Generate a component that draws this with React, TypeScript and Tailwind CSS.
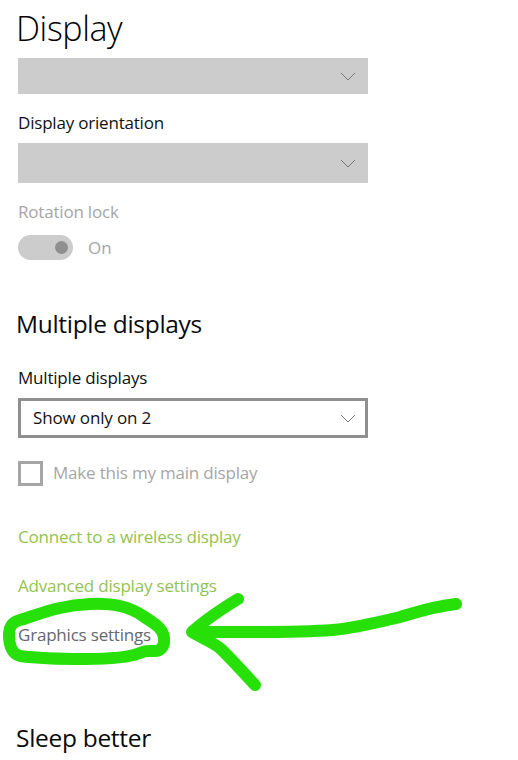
const font = "font-['Open_Sans','Noto_Sans',sans-serif]"

function Chevron() {
  return (
    <svg width="16" height="9" viewBox="0 0 16 9" fill="none" stroke="#777" strokeWidth="1">
      <path d="M1 1l7 7 7-7" />
    </svg>
  )
}

function Scribble() {
  return (
    <svg className="absolute left-0 top-[510px]" width="518" height="250" viewBox="0 0 518 250" fill="none" stroke="#27e007" strokeLinecap="round" strokeLinejoin="round">
      <path
        strokeWidth="12"
        d="M9 125C9 116 12 112 20 110C40 104 60 95 90 94C115 93 130 97 143 106C155 114 163 118 164 128C165 137 160 141 155 141C148 141 145 140 140 143C125 149 100 149 85 149C60 149 35 148 20 146C12 144 9 135 9 125Z"
      />
      <path
        strokeWidth="12"
        d="M456 94C430 97 415 103 400 107C375 113 355 118 333 120C290 123 240 122 192 122M238 89C220 100 205 110 192 122C205 130 215 133 222 140C235 153 245 164 255 175"
      />
    </svg>
  )
}

export default function App() {
  return (
    <div className={`relative h-[760px] w-[518px] overflow-hidden bg-white ${font}`}>
      <div className="px-[18px]">
        <h1 className="-ml-[2px] h-[58px] pt-[6px] text-[34px] font-light leading-[44px] tracking-[-0.4px] text-black">Display</h1>
        <div className="flex h-9 w-[350px] items-center justify-end bg-[#cccccc] pr-3">
          <Chevron />
        </div>
        <p className="mt-[18px] h-[31px] text-[17px] leading-[22px] tracking-[-0.2px] text-[#111]">Display orientation</p>
        <div className="flex h-10 w-[350px] items-center justify-end bg-[#cccccc] pr-3">
          <Chevron />
        </div>
        <p className="mt-[18px] h-[34px] text-[17px] leading-[22px] tracking-[-0.2px] text-[#a6a6a6]">Rotation lock</p>
        <div className="flex h-[25px] items-center">
          <div className="flex h-[25px] w-[55px] items-center justify-end rounded-full bg-[#cccccc] pr-[5px]">
            <div className="h-[13px] w-[13px] rounded-full bg-[#8f8f8f]" />
          </div>
          <span className="ml-[15px] text-[17px] text-[#a6a6a6]">On</span>
        </div>
        <h2 className="-ml-[2px] mt-[48px] text-[24.5px] leading-[32px] tracking-[-0.3px] text-[#0a0a0a]">Multiple displays</h2>
        <p className="mt-[27px] h-[31px] text-[17px] leading-[22px] tracking-[-0.2px] text-[#111]">Multiple displays</p>
        <div className="flex h-10 w-[350px] items-center justify-between border-[3px] border-[#8f8f8f] bg-white pl-3 pr-[9px]">
          <span className="text-[17px] tracking-[-0.15px] text-[#111]">Show only on 2</span>
          <Chevron />
        </div>
        <div className="mt-[23px] flex h-[25px] items-center">
          <div className="h-[25px] w-[25px] border-[3px] border-[#a6a6a6]" />
          <span className="ml-[10px] -translate-y-px text-[17px] tracking-[-0.2px] text-[#a6a6a6]">Make this my main display</span>
        </div>
        <div className="mt-[40px] flex flex-col gap-[27px] text-[17px] leading-[22px] tracking-[-0.2px]">
          <a className="text-[#92c353]">Connect to a wireless display</a>
          <a className="text-[#92c353]">Advanced display settings</a>
          <a className="text-[#66666e]">Graphics settings</a>
        </div>
        <h2 className="-ml-[2px] mt-[76px] text-[24.5px] leading-[32px] tracking-[-0.3px] text-[#0a0a0a]">Sleep better</h2>
      </div>
      <Scribble />
    </div>
  )
}
